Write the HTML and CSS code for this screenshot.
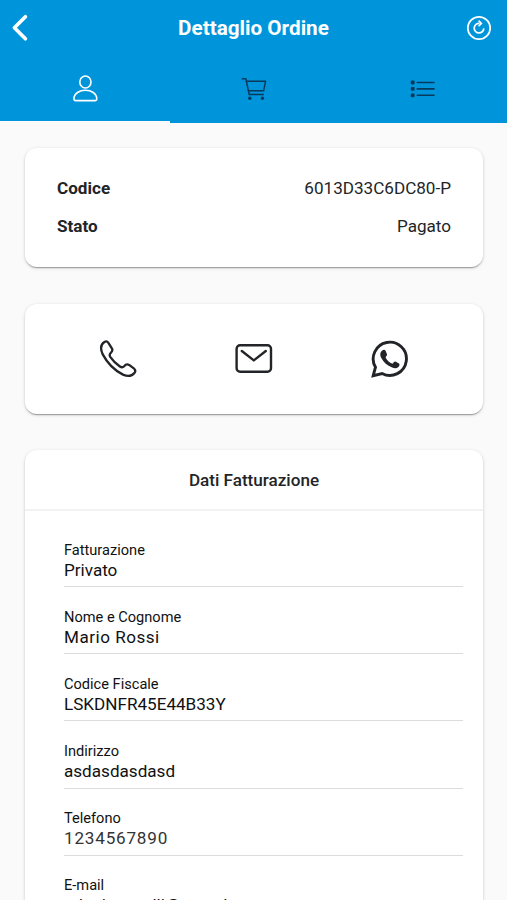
FILE: index.html
```html
<!DOCTYPE html>
<html lang="it">
<head>
    <meta charset="UTF-8">
    <meta name="viewport" content="width=device-width, initial-scale=1.0">
    <title>Dettaglio Ordine</title>
    <link rel="stylesheet" href="styles.css">
</head>
<body>

<header class="header">
    <div class="toolbar">
        <button class="icon-button" aria-label="Indietro">
            <svg width="20" height="30" viewBox="0 0 20 30"><path d="M16.4 3.8 L5.4 14.8 L16.4 25.8" fill="none" stroke="#fff" stroke-width="3.7" stroke-linecap="round" stroke-linejoin="round"/></svg>
        </button>
        <h1 class="title">Dettaglio Ordine</h1>
        <button class="icon-button" aria-label="Aggiorna">
            <svg width="26" height="26" viewBox="0 0 26 26" fill="none" stroke="#fff">
                <circle cx="13" cy="13" r="11.2" stroke-width="1.7"/>
                <path d="M13.6 8.4 A4.8 4.8 0 1 0 17.8 13.4" stroke-width="1.7"/>
                <path d="M12.6 5.6 L15.4 8.4 L12.6 11.2" stroke-width="1.6"/>
            </svg>
        </button>
    </div>
    <nav class="tabs">
        <a class="tab active">
            <svg width="26" height="28" viewBox="0 0 26 28" fill="none" stroke="#fff" stroke-width="1.6">
                <ellipse cx="13.4" cy="8" rx="5.6" ry="6"/>
                <path d="M1.9 25 C1.9 13.4 24.8 13.4 24.8 25 Q24.8 26.6 23.4 26.6 H3.4 Q1.9 26.6 1.9 25 Z"/>
            </svg>
        </a>
        <a class="tab">
            <svg width="26" height="24" viewBox="0 0 26 24" fill="none" stroke="#07395c" stroke-width="1.5" stroke-linejoin="round">
                <path d="M.7 1.7 H4.8 L8.2 17.5 H22.8"/>
                <path d="M5.5 4.2 H24.6 L22.6 13.8 H7.5"/>
                <circle cx="8.8" cy="21.2" r="1.7" fill="#07395c" stroke="none"/>
                <circle cx="21.4" cy="21.2" r="1.7" fill="#07395c" stroke="none"/>
            </svg>
        </a>
        <a class="tab">
            <svg width="26" height="20" viewBox="0 0 26 20" fill="#07395c">
                <rect x=".8" y="1.6" width="3.8" height="3.8" rx="1"/>
                <rect x=".8" y="8" width="3.8" height="3.8" rx="1"/>
                <rect x=".8" y="14.4" width="3.8" height="3.8" rx="1"/>
                <path d="M7.3 3.5 H24 M7.3 9.9 H24 M7.3 16.3 H24" stroke="#07395c" stroke-width="1.6" stroke-linecap="round"/>
            </svg>
        </a>
    </nav>
</header>

<main class="content">
    <section class="card summary">
        <div class="row"><b>Codice</b><span>6013D33C6DC80-P</span></div>
        <div class="row"><b>Stato</b><span>Pagato</span></div>
    </section>

    <section class="card contacts">
        <a class="contact" aria-label="Telefono">
            <svg width="40" height="40" viewBox="0 0 40 40" fill="none" stroke="#222428" stroke-width="2.3" stroke-linejoin="round">
                <path d="M6.4 3 C7.9 2 9.4 2.3 10.4 3.8 L14 9.6 C14.8 11.2 14.2 12.6 12.8 13.8 C11.4 15 11.5 16.6 12.4 18.1 C15.1 22 18.1 24.9 21.9 27.5 C23.4 28.5 25.1 28.3 26.2 27.2 C27.5 25.5 29.4 25 31.1 25.9 L35.8 29.4 C37.4 30.7 37.6 32.5 36.4 34 C33.5 37.6 30.1 37.8 25 35.6 C16.8 31.5 8.9 23.3 4.6 15.1 C2.2 9.6 2.3 5.6 6.4 3 Z"/>
            </svg>
        </a>
        <a class="contact" aria-label="E-mail">
            <svg width="40" height="40" viewBox="0 0 40 40" fill="none" stroke="#222428" stroke-width="2.4" stroke-linecap="round" stroke-linejoin="round">
                <rect x="2.6" y="6.3" width="34.4" height="26.4" rx="3.5"/>
                <path d="M7.8 12 L19.8 21.4 L31.8 12"/>
            </svg>
        </a>
        <a class="contact" aria-label="WhatsApp">
            <svg width="40" height="40" viewBox="0 0 40 40">
                <path d="M3.2 36.7 L5.5 28.2 A16.6 16.6 0 1 1 12.1 34.5 Z" fill="none" stroke="#222428" stroke-width="2.9"/>
                <path d="M12.2 11.4 C13.3 10.6 15 10.5 15.5 11.7 L17 15.2 C17.3 16.3 16.3 17.2 15.5 18.3 C17 21.4 19.3 23.6 22.5 24.8 C23.6 23.8 24.3 22.2 25.4 22.6 L29 24.4 C30 25 29.4 27 28.4 28 C26.6 29.5 24.6 29.5 22.2 28.5 C17.2 26.7 13.6 23.2 11.3 19 C9.7 16 9.9 13.2 12.2 11.4 Z" fill="#222428"/>
            </svg>
        </a>
    </section>

    <section class="card billing">
        <h2 class="card-title">Dati Fatturazione</h2>
        <div class="fields">
            <div class="field"><label>Fatturazione</label><p>Privato</p></div>
            <div class="field"><label>Nome e Cognome</label><p class="name">Mario Rossi</p></div>
            <div class="field"><label>Codice Fiscale</label><p>LSKDNFR45E44B33Y</p></div>
            <div class="field"><label>Indirizzo</label><p>asdasdasdasd</p></div>
            <div class="field"><label>Telefono</label><p class="phone">1234567890</p></div>
            <div class="field"><label>E-mail</label><p>adani.rosselli@sound</p></div>
        </div>
    </section>
</main>

</body>
</html>
```
FILE: styles.css
```css
* {
    box-sizing: border-box;
}

html {
    height: 100%;
    overflow: hidden;
}

body {
    display: flex;
    flex-direction: column;
    font-family: Roboto, sans-serif;
    background-color: #fafafa;
    color: #222428;
    margin: 0;
    height: 100%;
    overflow: hidden;
}

h1, h2, p {
    margin: 0;
}

svg {
    display: block;
}

.header {
    flex: none;
    background-color: #0095da;
    height: 123px;
}

.toolbar {
    display: flex;
    align-items: center;
    justify-content: space-between;
    height: 56px;
    padding: 0 15px 0 9px;
}

.icon-button {
    display: flex;
    width: 26px;
    padding: 0;
    border: none;
    background: none;
}

.title {
    padding-left: 6px;
    color: #fff;
    font-size: 20.7px;
    font-weight: 700;
}

.tabs {
    display: flex;
    height: 67px;
}

.tab {
    display: flex;
    flex: 1;
    align-items: center;
    justify-content: center;
    padding-bottom: 1px;
}

.tab.active {
    flex: 1.01;
    border-bottom: 2px solid #fafafa;
}

.content {
    display: flex;
    flex: 1;
    flex-direction: column;
    gap: 36.5px;
    min-height: 0;
    padding: 25px 24px 0 25px;
    overflow: hidden;
}

.card {
    flex: none;
    background-color: #fff;
    border-radius: 12px;
    box-shadow: 0 2px 1px -1px rgba(0, 0, 0, 0.24), 0 1px 2px rgba(0, 0, 0, 0.16), 0 1px 4px rgba(0, 0, 0, 0.1);
}

.summary {
    height: 119px;
    padding: 21px 32px 0 32px;
}

.row {
    display: flex;
    align-items: center;
    justify-content: space-between;
    height: 38px;
    font-size: 17.1px;
}

.contacts {
    display: flex;
    align-items: center;
    justify-content: space-around;
    height: 110px;
    padding: 1px 25px 0 25px;
}

.billing {
    flex: 1;
    min-height: 0;
    border-radius: 12px 12px 0 0;
    overflow: hidden;
}

.card-title {
    height: 61px;
    border-bottom: 2px solid #f2f2f2;
    font-size: 17.1px;
    font-weight: 500;
    line-height: 60px;
    text-align: center;
}

.fields {
    padding: 29px 20px 0 39px;
}

.field {
    height: 47.4px;
    margin-bottom: 19.66px;
    border-bottom: 1px solid #dcdcdc;
    color: #111;
}

.field label {
    display: block;
    font-size: 14.6px;
    line-height: 20px;
}

.field p {
    font-size: 17.1px;
    line-height: 21px;
}

.field .name {
    letter-spacing: 0.5px;
}

.field .phone {
    color: #333;
    letter-spacing: 0.8px;
}
```
